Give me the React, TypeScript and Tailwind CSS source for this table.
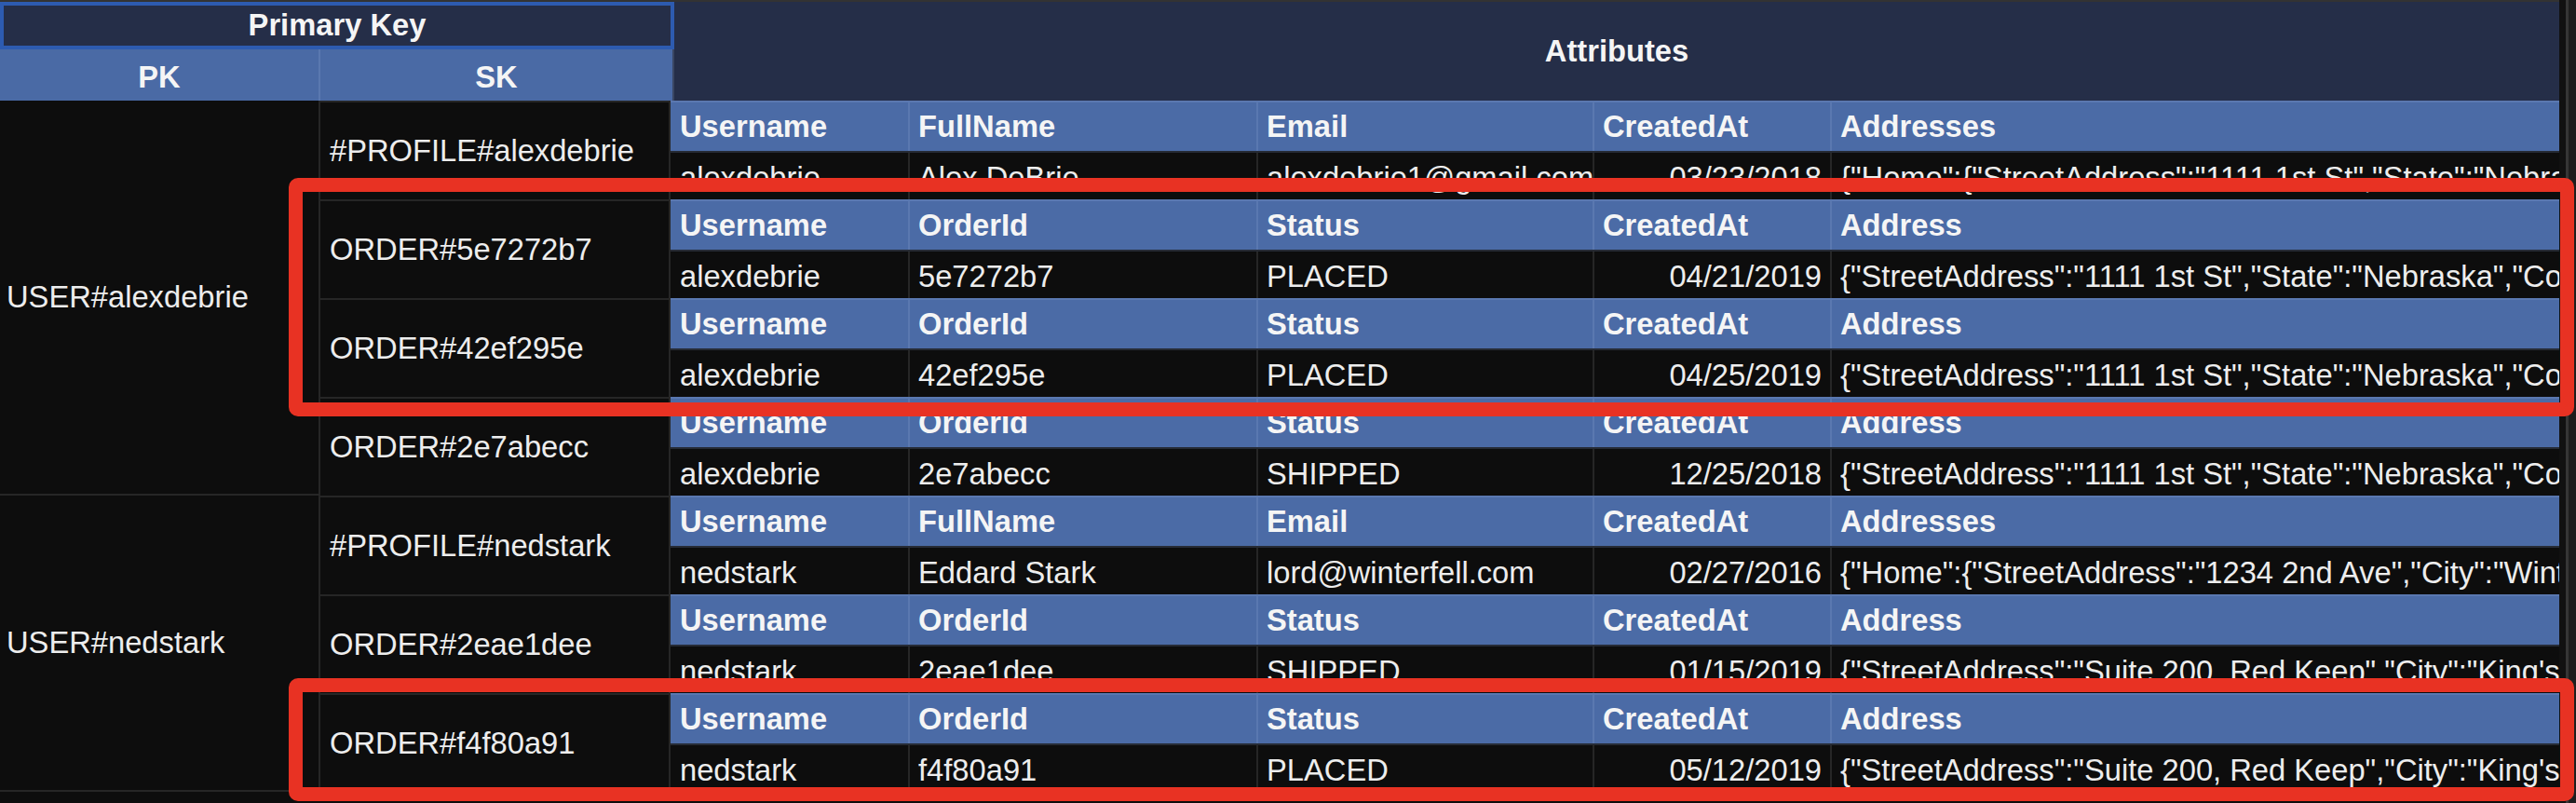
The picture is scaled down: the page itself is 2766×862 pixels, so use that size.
import React from "react";

type Row = {
  sk: string;
  headers: string[];
  data: string[];
};

const ADDR_A = '{"StreetAddress":"1111 1st St","State":"Nebraska","Country":"US"}';
const ADDR_N = '{"StreetAddress":"Suite 200, Red Keep","City":"King\'s Landing","State":"Westeros"}';
const ORDER_H = ["Username", "OrderId", "Status", "CreatedAt", "Address"];
const PROF_H = ["Username", "FullName", "Email", "CreatedAt", "Addresses"];

const rows: Row[] = [
  {
    sk: "#PROFILE#alexdebrie",
    headers: PROF_H,
    data: [
      "alexdebrie",
      "Alex DeBrie",
      "alexdebrie1@gmail.com",
      "03/23/2018",
      '{"Home":{"StreetAddress":"1111 1st St","State":"Nebraska","Country":"US"}}',
    ],
  },
  { sk: "ORDER#5e7272b7", headers: ORDER_H, data: ["alexdebrie", "5e7272b7", "PLACED", "04/21/2019", ADDR_A] },
  { sk: "ORDER#42ef295e", headers: ORDER_H, data: ["alexdebrie", "42ef295e", "PLACED", "04/25/2019", ADDR_A] },
  { sk: "ORDER#2e7abecc", headers: ORDER_H, data: ["alexdebrie", "2e7abecc", "SHIPPED", "12/25/2018", ADDR_A] },
  {
    sk: "#PROFILE#nedstark",
    headers: PROF_H,
    data: [
      "nedstark",
      "Eddard Stark",
      "lord@winterfell.com",
      "02/27/2016",
      '{"Home":{"StreetAddress":"1234 2nd Ave","City":"Winterfell","State":"The North"}}',
    ],
  },
  { sk: "ORDER#2eae1dee", headers: ORDER_H, data: ["nedstark", "2eae1dee", "SHIPPED", "01/15/2019", ADDR_N] },
  { sk: "ORDER#f4f80a91", headers: ORDER_H, data: ["nedstark", "f4f80a91", "PLACED", "05/12/2019", ADDR_N] },
];

const colW = ["w-[257px] shrink-0", "w-[374px] shrink-0", "w-[361px] shrink-0", "w-[255px] shrink-0", "flex-1"];

function HeaderCells({ headers }: { headers: string[] }) {
  return (
    <div className="h-[54px] flex bg-[#4b6ba6] border-t-2 border-[#5a78b0]">
      {headers.map((h, i) => (
        <div
          key={i}
          className={`${colW[i]} ${i === 0 ? "pl-[10px]" : "pl-[9px]"} ${
            i < 4 ? "border-r-2 border-[#5a78b0]" : ""
          } flex items-center font-bold text-[#f5f5f5] overflow-hidden whitespace-nowrap min-w-0`}
        >
          {h}
        </div>
      ))}
    </div>
  );
}

function DataCells({ data }: { data: string[] }) {
  return (
    <div className="h-[52px] flex bg-[#0d0d0d] border-t-2 border-[#262b35]">
      {data.map((d, i) => (
        <div
          key={i}
          className={`${colW[i]} ${i === 0 ? "pl-[10px]" : "pl-[9px]"} ${
            i === 3 ? "justify-end pr-[9px]" : ""
          } ${i < 4 ? "border-r-2 border-[#262626]" : ""} flex items-center pt-[4px] overflow-hidden whitespace-nowrap min-w-0`}
        >
          {d}
        </div>
      ))}
    </div>
  );
}

export default function App() {
  return (
    <div className="relative w-[2766px] h-[862px] overflow-hidden bg-[#0d0d0d] flex font-['Liberation_Sans',Arial,sans-serif] text-[32.7px] leading-none text-[#ededed]">
      <div className="w-[2748px] shrink-0 flex flex-col">
        <div className="h-[2px] bg-[#333333]" />
        {/* header */}
        <div className="h-[106px] flex">
          <div className="w-[724px] shrink-0 flex flex-col">
            <div className="h-[51px] border-[4px] border-[#2d5bb0] bg-[#252e48] flex items-center justify-center font-bold text-[#f5f5f5]">
              Primary Key
            </div>
            <div className="h-[55px] flex bg-[#4a6aa5] border-r-2 border-[#3a4663]">
              <div className="w-[344px] shrink-0 border-r-2 border-[#5a78b0] flex items-center justify-center pt-[6px] font-bold text-[#f5f5f5]">
                PK
              </div>
              <div className="flex-1 flex items-center justify-center pt-[6px] font-bold text-[#f5f5f5]">SK</div>
            </div>
          </div>
          <div className="flex-1 min-w-0 bg-[#252e48] flex items-center justify-center font-bold text-[#f5f5f5]">
            Attributes
          </div>
        </div>
        {/* body */}
        <div className="flex">
          <div className="w-[344px] shrink-0 flex flex-col border-r-2 border-[#262626]">
            <div className="h-[424px] flex items-center pl-[7px] border-b-2 border-[#262626] whitespace-nowrap">
              USER#alexdebrie
            </div>
            <div className="h-[318px] flex items-center pl-[7px] border-b-2 border-[#262626] whitespace-nowrap">
              USER#nedstark
            </div>
          </div>
          <div className="flex-1 min-w-0 flex flex-col">
            {rows.map((r, i) => (
              <div key={i} className="h-[106px] flex">
                <div className="w-[376px] shrink-0 flex items-center pl-[10px] border-r-2 border-t-2 border-[#262626] whitespace-nowrap">
                  {r.sk}
                </div>
                <div className="flex-1 flex flex-col min-w-0">
                  <HeaderCells headers={r.headers} />
                  <DataCells data={r.data} />
                </div>
              </div>
            ))}
            <div className="h-[2px] bg-[#262626]" />
          </div>
        </div>
      </div>
      {/* right strip */}
      <div className="flex-1 flex">
        <div className="w-[7px] bg-[#111111]" />
        <div className="w-[3px] bg-[#363636]" />
        <div className="flex-1 bg-[#1e1e1e]" />
      </div>
      {/* highlight boxes */}
      <div className="absolute left-[310px] top-[191px] w-[2454px] h-[256px] border-[15px] border-[#e83223] rounded-[10px]" />
      <div className="absolute left-[310px] top-[728px] w-[2454px] h-[132px] border-[15px] border-[#e83223] rounded-[10px]" />
    </div>
  );
}
